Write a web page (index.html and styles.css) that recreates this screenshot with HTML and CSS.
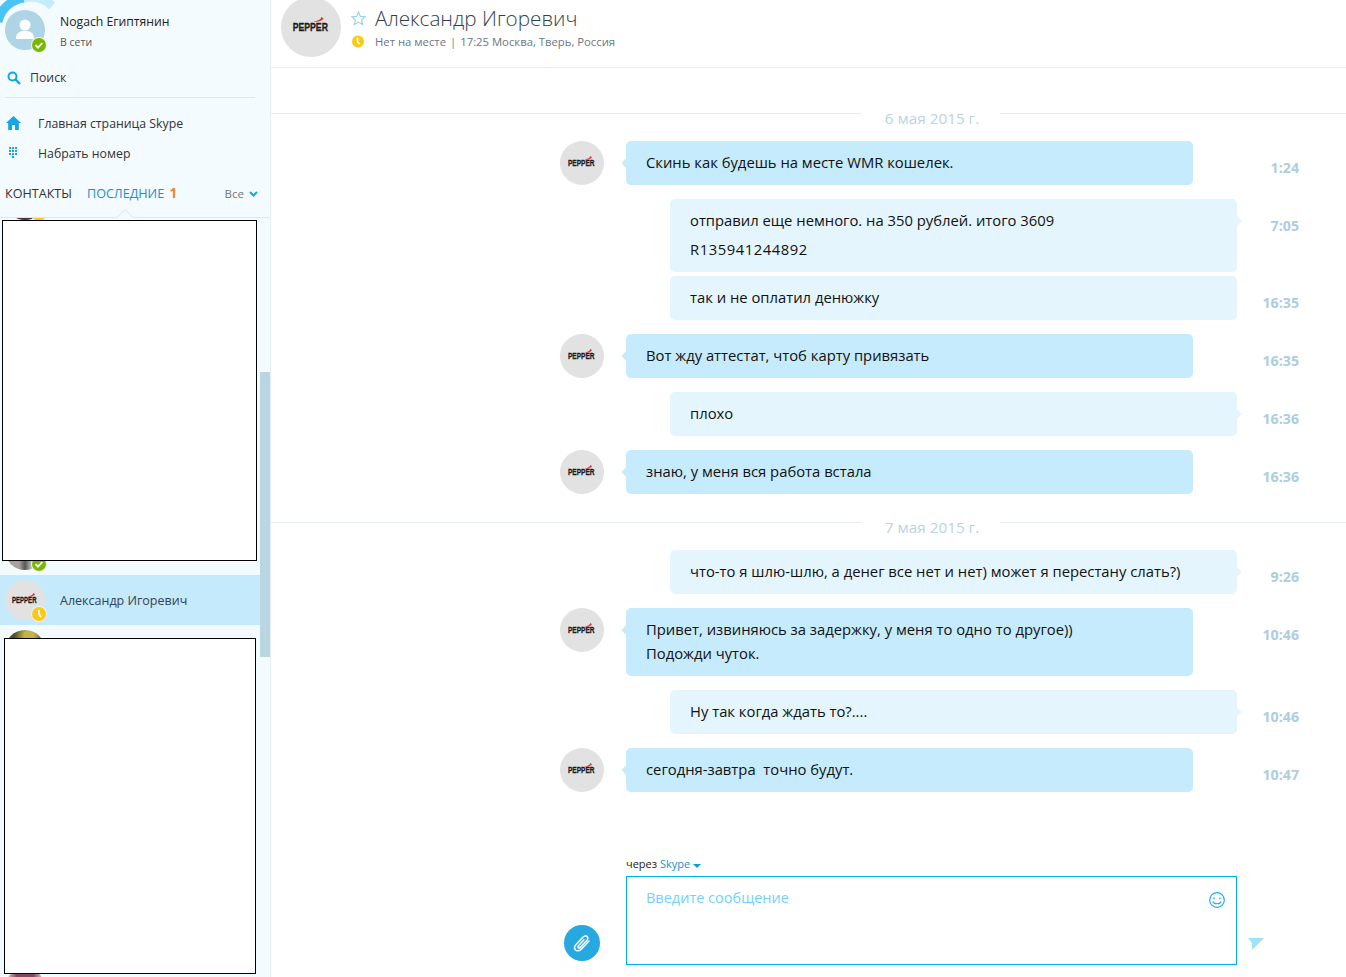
FILE: index.html
```html
<!DOCTYPE html>
<html lang="ru">
<head>
<meta charset="utf-8">
<title>Skype</title>
<link rel="stylesheet" href="styles.css">
</head>
<body>
<aside class="side">
  <div class="me">
    <svg class="arc" width="60" height="24" viewBox="0 0 60 24"><path d="M-2 22A30 30 0 0 1 24 -2" fill="none" stroke="#4cc3f4" stroke-width="9"/><path d="M24 -2A30 30 0 0 1 52 6" fill="none" stroke="#c4ecfb" stroke-width="9"/></svg>
    <div class="avatar-me">
      <svg width="40" height="40" viewBox="0 0 40 40"><circle cx="20" cy="20" r="20" fill="#aed4e6"/><circle cx="20" cy="15" r="5.5" fill="#fff"/><path d="M11 29c0-7 4-8 9-8s9 1 9 8z" fill="#fff"/></svg>
      <span class="dot dot-on"><svg width="14" height="14" viewBox="0 0 14 14"><path d="M3.5 7.2l2.4 2.4 4.4-4.600" fill="none" stroke="#fff" stroke-width="1.800"/></svg></span>
    </div>
    <div class="me-text">
      <div class="me-name">Nogach Египтянин</div>
      <div class="me-status">В сети</div>
    </div>
  </div>
  <div class="search">
    <svg width="14" height="14" viewBox="0 0 14 14"><circle cx="5.5" cy="5.5" r="4" fill="none" stroke="#12a5e8" stroke-width="2"/><path d="M8.500 8.500l4.500 4.500" stroke="#12a5e8" stroke-width="2.400"/></svg>
    <span>Поиск</span>
  </div>
  <nav class="nav">
    <div class="nav-item">
      <span class="nav-icon"><svg width="15" height="14" viewBox="0 0 15 14"><path d="M7.500 0L0 7h2.200v7h3.800V9h3v5h3.800V7H15z" fill="#12a5e8"/></svg></span>
      <span>Главная страница Skype</span>
    </div>
    <div class="nav-item">
      <span class="nav-icon"><svg width="15" height="12" viewBox="0 0 15 12" fill="#12a5e8"><path d="M3 0h2v2H3zM6 0h2v2H6zM9 0h2v2H9zM3 3h2v2H3zM6 3h2v2H6zM9 3h2v2H9zM3 6h2v2H3zM6 6h2v2H6zM9 6h2v2H9zM6 9h2v2H6z"/></svg></span>
      <span>Набрать номер</span>
    </div>
  </nav>
  <div class="tabs">
    <span class="tab">КОНТАКТЫ</span>
    <span class="tab tab-on">ПОСЛЕДНИЕ <b class="count">1</b></span>
    <span class="filter">Все <svg width="9" height="6" viewBox="0 0 9 6"><path d="M1 1l3.500 3.500L8 1" fill="none" stroke="#12a5e8" stroke-width="2"/></svg></span>
  </div>
  <div class="list-wrap">
    <div class="list">
      <div class="row"><span class="pic pic-a"></span><span class="dot dot-away"></span></div>
      <div class="gap-a"></div>
      <div class="row"><span class="pic pic-b"></span><span class="dot dot-on"><svg width="14" height="14" viewBox="0 0 14 14"><path d="M3.500 7.200l2.400 2.400 4.400-4.600" fill="none" stroke="#fff" stroke-width="1.800"/></svg></span></div>
      <div class="row row-on">
        <span class="pepper pepper-s"><span class="word">PEPPER</span><svg class="chili" viewBox="0 0 12 6"><path d="M0 5.500C4 5 7 3.500 9 1.500L9 0 12 1.500C11 4.500 5 6.500 0 5.500z" fill="#d9363a"/></svg></span>
        <span class="dot dot-away"><svg width="14" height="14" viewBox="0 0 14 14"><path d="M7 3v4l2 3" fill="none" stroke="#fff" stroke-width="1.800"/></svg></span>
        <span class="row-name">Александр Игоревич</span>
      </div>
      <div class="row"><span class="pic pic-c"></span></div>
      <div class="gap-b"></div>
      <div class="row"><span class="pic pic-d"></span></div>
    </div>
    <div class="redact redact-top"></div>
    <div class="redact redact-bottom"></div>
    <div class="scrollbar"><div class="thumb"></div></div>
  </div>
</aside>

<main class="main">
  <header class="head">
    <span class="pepper pepper-l"><span class="word">PEPPER</span><svg class="chili" viewBox="0 0 12 6"><path d="M0 5.500C4 5 7 3.500 9 1.500L9 0 12 1.500C11 4.500 5 6.500 0 5.500z" fill="#d9363a"/></svg></span>
    <div class="head-col">
      <div class="head-top">
        <svg class="head-ico" width="15" height="15" viewBox="0 0 15 15"><path d="M7.500 1l1.900 4.400 4.700.4-3.600 3.100 1.100 4.700-4.100-2.500-4.100 2.500 1.100-4.700L.9 5.800l4.700-.4z" fill="none" stroke="#9dd3ec" stroke-width="1.200"/></svg>
        <h1 class="head-name">Александр Игоревич</h1>
      </div>
      <div class="head-sub">
        <svg class="head-ico" width="15" height="13" viewBox="0 0 15 13"><circle cx="7" cy="6.500" r="6" fill="#fcc916"/><path d="M6.500 2.800v4l2.200 2.500" fill="none" stroke="#fff" stroke-width="1.600"/></svg>
        <span>Нет на месте</span><span class="sep">|</span><span>17:25 Москва, Тверь, Россия</span>
      </div>
    </div>
  </header>

  <section class="chat">
    <div class="day first"><span>6 мая 2015 г.</span></div>

    <div class="msg in"><span class="pepper pepper-m"><span class="word">PEPPER</span><svg class="chili" viewBox="0 0 12 6"><path d="M0 5.500C4 5 7 3.500 9 1.500L9 0 12 1.500C11 4.500 5 6.500 0 5.500z" fill="#d9363a"/></svg></span><div class="bubble">Скинь как будешь на месте WMR кошелек.</div><time>1:24</time></div>
    <div class="msg out"><div class="bubble">отправил еще немного. на 350 рублей. итого 3609<p class="next">R135941244892</p></div><time>7:05</time></div>
    <div class="msg out tight"><div class="bubble">так и не оплатил денюжку</div><time>16:35</time></div>
    <div class="msg in"><span class="pepper pepper-m"><span class="word">PEPPER</span><svg class="chili" viewBox="0 0 12 6"><path d="M0 5.500C4 5 7 3.500 9 1.500L9 0 12 1.500C11 4.500 5 6.500 0 5.500z" fill="#d9363a"/></svg></span><div class="bubble">Вот жду аттестат, чтоб карту привязать</div><time>16:35</time></div>
    <div class="msg out"><div class="bubble">плохо</div><time>16:36</time></div>
    <div class="msg in"><span class="pepper pepper-m"><span class="word">PEPPER</span><svg class="chili" viewBox="0 0 12 6"><path d="M0 5.500C4 5 7 3.500 9 1.500L9 0 12 1.500C11 4.500 5 6.500 0 5.500z" fill="#d9363a"/></svg></span><div class="bubble">знаю, у меня вся работа встала</div><time>16:36</time></div>

    <div class="day"><span>7 мая 2015 г.</span></div>

    <div class="msg out"><div class="bubble">что-то я шлю-шлю, а денег все нет и нет) может я перестану слать?)</div><time>9:26</time></div>
    <div class="msg in"><span class="pepper pepper-m"><span class="word">PEPPER</span><svg class="chili" viewBox="0 0 12 6"><path d="M0 5.500C4 5 7 3.500 9 1.500L9 0 12 1.500C11 4.500 5 6.500 0 5.500z" fill="#d9363a"/></svg></span><div class="bubble">Привет, извиняюсь за задержку, у меня то одно то другое))<br>Подожди чуток.</div><time>10:46</time></div>
    <div class="msg out"><div class="bubble">Ну так когда ждать то?....</div><time>10:46</time></div>
    <div class="msg in"><span class="pepper pepper-m"><span class="word">PEPPER</span><svg class="chili" viewBox="0 0 12 6"><path d="M0 5.500C4 5 7 3.500 9 1.500L9 0 12 1.500C11 4.500 5 6.500 0 5.500z" fill="#d9363a"/></svg></span><div class="bubble">сегодня-завтра&nbsp; точно будут.</div><time>10:47</time></div>
  </section>

  <section class="composer">
    <div class="via">через <span class="via-link">Skype</span> <svg width="8" height="4" viewBox="0 0 8 4"><path d="M0 0h8L4 4z" fill="#0f9bd7"/></svg></div>
    <div class="compose-row">
      <span class="clip"><svg width="22" height="22" viewBox="0 0 22 22"><path d="M18 9l-7.500 8c-2 2.200-4.800 2.200-6 .9-1.300-1.300-1-3.600.6-5.300l7-7.500c1.300-1.400 3-1.600 4-.6s.9 2.600-.3 3.900l-6.600 7c-.7.700-1.500.8-2 .3s-.4-1.300.3-2l5.500-5.900" fill="none" stroke="#fff" stroke-width="1.500" stroke-linecap="round"/></svg></span>
      <div class="input">
        <span class="placeholder">Введите сообщение</span>
        <svg class="smile" width="16" height="16" viewBox="0 0 16 16"><circle cx="8" cy="8" r="7.300" fill="none" stroke="#19b2ef" stroke-width="1.200"/><path d="M5 5.500v1.800M11 5.500v1.800" stroke="#19b2ef" stroke-width="1.400"/><path d="M4 9.500c1 3 7 3 8 0" fill="none" stroke="#19b2ef" stroke-width="1.200"/></svg>
      </div>
      <svg class="send" width="16" height="12" viewBox="0 0 16 12"><path d="M0 0h16L4 12V5z" fill="#9fe3fb"/></svg>
    </div>
  </section>
</main>
</body>
</html>
```
FILE: styles.css
```css
* { box-sizing: border-box; }
html, body { height: 100%; }
body {
  margin: 0;
  display: flex;
  height: 977px;
  overflow: hidden;
  background: #fff;
  font-family: "Open Sans", "Noto Sans", sans-serif;
  color: #222;
}

/* sidebar */
.side {
  width: 271px;
  flex: none;
  display: flex;
  flex-direction: column;
  background: #f3fbff;
  border-right: 1px solid #e4eef3;
  overflow: hidden;
}
.me { position: relative; display: flex; height: 60px; padding: 10px 0 0 5px; }
.arc { position: absolute; left: 0; top: 0; }
.avatar-me { position: relative; width: 40px; height: 40px; }
.avatar-me svg { display: block; }
.dot {
  position: absolute;
  width: 14px;
  height: 14px;
  border-radius: 50%;
  box-shadow: 0 0 0 1px #e8f4f9;
}
.dot svg { display: block; }
.dot-on { background: #7ab800; }
.dot-away { background: #fcc916; }
.avatar-me .dot { right: -1px; bottom: -2px; }
.me-text { margin-left: 15px; }
.me-name { font-size: 12.200px; line-height: 24px; color: #222; }
.me-status { font-size: 10.500px; line-height: 16px; color: #555; }

.search {
  display: flex;
  align-items: center;
  gap: 9px;
  height: 38px;
  margin: 0 15px 0 5px;
  padding-left: 2px;
  padding-bottom: 2px;
  border-bottom: 1px solid #dbe8ec;
  font-size: 12.300px;
  color: #333;
}
.search svg { flex: none; }
.nav { padding-top: 10px; }
.nav-item {
  display: flex;
  align-items: center;
  height: 30px;
  padding-left: 6px;
  font-size: 12.300px;
  color: #333;
}
.nav-icon { width: 32px; display: flex; }

.tabs {
  position: relative;
  display: flex;
  align-items: baseline;
  height: 47px;
  padding: 14px 12px 0 5px;
  margin-top: 3px;
  font-size: 12.600px;
  line-height: 18px;
  border-bottom: 1px solid #dbe8ec;
}
.tabs::after {
  content: "";
  position: absolute;
  left: 119px;
  bottom: -6px;
  width: 11px;
  height: 11px;
  transform: rotate(45deg);
  border-radius: 2px 0 0 0;
  background: #f3fbff;
  border-left: 1px solid #dbe8ec;
  border-top: 1px solid #dbe8ec;
}
.tab { color: #333; }
.tab-on { color: #1d8ec9; margin-left: 15px; }
.count { color: #f6821f; font-weight: 700; font-size: 13.500px; line-height: 1; margin-left: 2px; }
.filter { margin-left: auto; color: #777; font-size: 11.500px; display: flex; align-items: center; gap: 5px; }

.list-wrap { position: relative; flex: 1; overflow: hidden; }
.list { margin-top: -43px; width: 260px; }
.row { position: relative; height: 50px; }
.row .dot { left: 32px; top: 32px; }
.row-on { background: #c5eafb; }
.row-name { position: absolute; left: 60px; top: 17px; font-size: 12.500px; color: #32425a; }
.pic {
  position: absolute;
  left: 5px;
  top: 5px;
  width: 40px;
  height: 40px;
  border-radius: 50%;
}
.pic-a { background: #4a2f3c; }
.pic-b { background: linear-gradient(90deg, #a9a39a 0 35%, #55585a 50%, #d8d8d4 70%, #8d8f8c 100%); }
.pic-c { background: radial-gradient(circle at 60% 15%, #c4b24a 0 12%, #4b4f2a 35%); }
.pic-d { background: radial-gradient(circle at 50% 18%, #7d4a66 0 22%, #cfc7c4 45%); }
.gap-a { height: 300px; }
.gap-b { height: 288px; }
.redact {
  position: absolute;
  background: #fff;
  border: 1px solid #000;
}
.redact-top { left: 2px; top: 2px; width: 255px; height: 341px; }
.redact-bottom { left: 4px; top: 420px; width: 252px; height: 336px; }
.scrollbar { position: absolute; left: 260px; top: 0; bottom: 0; width: 10px; }
.thumb { margin-top: 154px; height: 285px; background: #bad6e3; }

/* pepper logo */
.pepper {
  flex: none;
  display: flex;
  align-items: center;
  justify-content: center;
  border-radius: 50%;
  background: #e2e2e2;
  color: #1c1c1c;
  font-family: "Liberation Sans", sans-serif;
  font-weight: 700;
  -webkit-text-stroke: .3px #1c1c1c;
  position: relative;
}
.word { display: block; }
.chili { position: absolute; }
.pepper-l { width: 60px; height: 60px; font-size: 11px; padding-right: 2px; margin-top: -3px; }
.pepper-l .word { transform: scaleX(.79); }
.pepper-l .chili { width: 11px; height: 5px; left: 32px; top: 20px; }
.pepper-m { width: 44px; height: 44px; font-size: 9px; padding-right: 1px; }
.pepper-m .word { transform: scaleX(.73); }
.pepper-m .chili { width: 10px; height: 4px; left: 23px; top: 15px; }
.pepper-s { position: absolute; left: 5px; top: 5px; width: 40px; height: 40px; font-size: 8.500px; padding-right: 1px; }
.pepper-s .word { transform: scaleX(.71); }
.pepper-s .chili { width: 8px; height: 4px; left: 22px; top: 13px; }

/* main */
.main { flex: 1; min-width: 0; display: flex; flex-direction: column; }
.head {
  height: 68px;
  flex: none;
  display: flex;
  padding: 0 0 0 10px;
  border-bottom: 1px solid #e8eef2;
  align-items: flex-start;
}
.head-col { margin-left: 10px; }
.head-top { display: flex; align-items: center; height: 37px; }
.head-ico { flex: none; display: block; margin-right: 9px; }
.head-name { margin: 0; font-size: 20.700px; font-weight: 300; color: #333f4d; line-height: 37px; }
.head-sub { display: flex; align-items: center; height: 9px; font-size: 11.300px; color: #6b7785; }
.sep { margin: 0 4px; }

.chat { flex: none; }
.day {
  display: flex;
  margin: 28px 0 27px;
  height: 1px;
  align-items: flex-start;
  background: #e8eef2;
}
.day.first { margin-top: 45px; }
.day span {
  margin-left: 591px;
  width: 138px;
  height: 24px;
  padding-left: 2px;
  text-align: center;
  background: #fff;
  color: #b8d3e2;
  font-size: 15.300px;
  line-height: 10px;
}
.msg {
  display: flex;
  align-items: flex-start;
  margin: 14px 0 0 289px;
}
.day + .msg { margin-top: 0; }
.msg.tight { margin-top: 4px; }
.msg.out { padding-left: 110px; }
.msg.in .pepper { margin-right: 22px; }
.bubble {
  position: relative;
  width: 567px;
  padding: 9px 20px 11px;
  border-radius: 5px;
  font-size: 14.800px;
  line-height: 24px;
  color: #111;
}
.next { margin: 5px 0 0; letter-spacing: .55px; }
.in .bubble { background: #c6ebfc; }
.out .bubble { background: #e4f5fd; }
.bubble::before {
  content: "";
  position: absolute;
  top: 18px;
  width: 8px;
  height: 8px;
  transform: rotate(45deg);
  border-radius: 1px;
}
.in .bubble::before { left: -3px; background: #c6ebfc; }
.out .bubble::before { right: -3px; background: #e4f5fd; }
.tight .bubble::before { display: none; }
time {
  margin-left: auto;
  margin-right: 47px;
  padding-top: 16px;
  font-size: 14.200px;
  font-weight: 700;
  line-height: 22px;
  color: #aecde0;
}

.composer { flex: none; margin: 65px 0 0 289px; }
.via { margin-left: 66px; height: 19px; font-size: 11px; line-height: 14px; color: #222; }
.via-link { color: #1d8ec9; }
.compose-row { display: flex; align-items: flex-start; }
.clip {
  flex: none;
  width: 36px;
  height: 36px;
  margin: 49px 26px 0 4px;
  border-radius: 50%;
  background: #25a9e0;
  display: flex;
  align-items: center;
  justify-content: center;
}
.input {
  position: relative;
  width: 611px;
  height: 89px;
  border: 1px solid #00aff0;
  padding: 9px 19px;
  font-size: 14.500px;
  line-height: 24px;
  color: #72d3f7;
}
.smile { position: absolute; right: 11px; top: 15px; }
.send { flex: none; margin: 62px 0 0 11px; }
```
